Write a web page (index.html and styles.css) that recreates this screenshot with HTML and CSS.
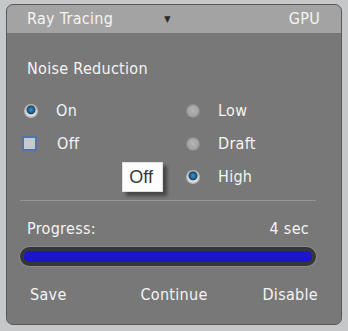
FILE: index.html
```html
<!DOCTYPE html>
<html lang="en">

<head>
    <meta charset="UTF-8">
    <title>Ray Tracing</title>
    <link rel="stylesheet" href="styles.css">
</head>

<body>
    <div class="panel">
        <header class="panel-head">
            <span>Ray Tracing</span>
            <span class="arrow">&#9660;</span>
            <span class="gpu">GPU</span>
        </header>

        <div class="panel-body">
            <h3>Noise Reduction</h3>

            <div class="options">
                <div class="opt"><span class="radio on"></span>On</div>
                <div class="opt"><span class="radio"></span>Low</div>
                <div class="opt"><span class="check"></span>Off</div>
                <div class="opt"><span class="radio"></span>Draft</div>
                <div class="opt tip-cell"><span class="tooltip">Off</span></div>
                <div class="opt"><span class="radio on"></span>High</div>
            </div>

            <hr>

            <div class="progress-row">
                <span>Progress:</span>
                <span>4 sec</span>
            </div>
            <div class="bar">
                <div class="fill" style="width: 100%"></div>
            </div>

            <div class="actions">
                <span>Save</span>
                <span>Continue</span>
                <span class="last">Disable</span>
            </div>
        </div>
    </div>
</body>
</html>
```

FILE: styles.css
```css
body {
    margin: 0;
    padding: 4px 6px 6px 6px;
    background-color: #c6c7c9;
    font-family: 'DejaVu Sans Condensed', 'DejaVu Sans', sans-serif;
    font-size: 16px;
    line-height: 20px;
    letter-spacing: 0.3px;
    color: #f4f4f4;
}

.panel {
    height: 321px;
    box-sizing: border-box;
    border: 1px solid #585858;
    border-radius: 7px;
    background-color: #787878;
    overflow: hidden;
    display: flex;
    flex-direction: column;
}

.panel-head {
    height: 28px;
    flex-shrink: 0;
    background-color: #a3a3a3;
    display: flex;
    align-items: center;
    padding: 0 21px 0 20px;
}

.arrow {
    font-size: 9px;
    color: #2a2a2a;
    margin-left: 51px;
}

.gpu {
    margin-left: auto;
}

.panel-body {
    padding: 0 25px 0 13px;
    flex: 1;
}

h3 {
    font-weight: normal;
    font-size: 16px;
    margin: 26px 0 0 7px;
}

.options {
    display: grid;
    grid-template-columns: 162px 1fr;
    grid-auto-rows: 33px;
    margin-top: 15px;
}

.opt {
    display: flex;
    align-items: center;
    padding-left: 5px;
}

.radio {
    width: 12px;
    height: 12px;
    border-radius: 50%;
    background: radial-gradient(circle at 50% 45%, #b4b4b4, #999999);
    box-shadow: 0 0 0 1px #8c8c8c;
    margin-right: 19px;
    box-sizing: border-box;
}

.radio.on {
    background: radial-gradient(circle at 50% 40%, #4a92c4 0, #1f5e8c 3px, #17466a 4px, #dcdcdc 5px);
    box-shadow: 0 0 0 1px #b8b8b8;
}

.check {
    width: 15px;
    height: 15px;
    box-sizing: border-box;
    border: 2px solid #4f74a8;
    background-color: #c6c9ce;
    margin-left: -3px;
    margin-right: 20px;
}

.tip-cell {
    justify-content: flex-end;
    padding-right: 19px;
}

.tooltip {
    background-color: #fdfdfd;
    color: #3a3a3a;
    font-family: 'Liberation Sans', sans-serif;
    font-size: 18px;
    letter-spacing: 0;
    line-height: 20px;
    padding: 4px 9px 4px 6px;
    border: 1px solid #e0e0e0;
    box-shadow: 4px 4px 3px rgba(40, 40, 40, 0.6);
}

hr {
    border: 0;
    border-top: 1px solid #959595;
    margin: 7px 0 0 0;
}

.progress-row {
    display: flex;
    justify-content: space-between;
    margin: 18px 7px 0 7px;
}

.bar {
    margin-top: 8px;
    height: 19px;
    box-sizing: border-box;
    border: 4px solid #363636;
    border-radius: 10px;
    background-color: #363636;
    box-shadow: 0 0 0 1px #8a8a8a;
    overflow: hidden;
}

.fill {
    height: 100%;
    background-color: #1b15cc;
    border-radius: 5px;
}

.actions {
    display: grid;
    grid-template-columns: 1fr auto 1fr;
    margin: 19px -2px 0 10px;
}

.actions .last {
    text-align: right;
}
```
